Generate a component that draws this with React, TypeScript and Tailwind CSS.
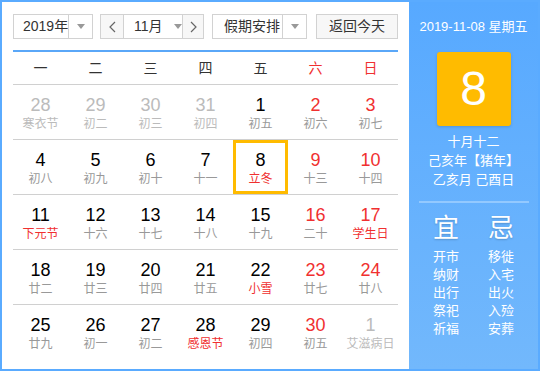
import React from "react";

type Day = {
	n: number;
	lunar: string;
	muted?: boolean;
	weekend?: boolean;
	festival?: boolean;
	today?: boolean;
};

const weeks: Day[][] = [
	[
		{ n: 28, lunar: "寒衣节", muted: true },
		{ n: 29, lunar: "初二", muted: true },
		{ n: 30, lunar: "初三", muted: true },
		{ n: 31, lunar: "初四", muted: true },
		{ n: 1, lunar: "初五" },
		{ n: 2, lunar: "初六", weekend: true },
		{ n: 3, lunar: "初七", weekend: true },
	],
	[
		{ n: 4, lunar: "初八" },
		{ n: 5, lunar: "初九" },
		{ n: 6, lunar: "初十" },
		{ n: 7, lunar: "十一" },
		{ n: 8, lunar: "立冬", festival: true, today: true },
		{ n: 9, lunar: "十三", weekend: true },
		{ n: 10, lunar: "十四", weekend: true },
	],
	[
		{ n: 11, lunar: "下元节", festival: true },
		{ n: 12, lunar: "十六" },
		{ n: 13, lunar: "十七" },
		{ n: 14, lunar: "十八" },
		{ n: 15, lunar: "十九" },
		{ n: 16, lunar: "二十", weekend: true },
		{ n: 17, lunar: "学生日", weekend: true, festival: true },
	],
	[
		{ n: 18, lunar: "廿二" },
		{ n: 19, lunar: "廿三" },
		{ n: 20, lunar: "廿四" },
		{ n: 21, lunar: "廿五" },
		{ n: 22, lunar: "小雪", festival: true },
		{ n: 23, lunar: "廿七", weekend: true },
		{ n: 24, lunar: "廿八", weekend: true },
	],
	[
		{ n: 25, lunar: "廿九" },
		{ n: 26, lunar: "初一" },
		{ n: 27, lunar: "初二" },
		{ n: 28, lunar: "感恩节", festival: true },
		{ n: 29, lunar: "初四" },
		{ n: 30, lunar: "初五", weekend: true },
		{ n: 1, lunar: "艾滋病日", muted: true },
	],
];

const weekdays = ["一", "二", "三", "四", "五", "六", "日"];
const good = ["开市", "纳财", "出行", "祭祀", "祈福"];
const bad = ["移徙", "入宅", "出火", "入殓", "安葬"];

function Caret() {
	return (
		<span className="w-0 h-0 border-x-[4px] border-x-transparent border-t-[5px] border-t-[#999]" />
	);
}

function Chevron({ dir }: { dir: "left" | "right" }) {
	return (
		<svg width="7" height="12" viewBox="0 0 7 12" fill="none">
			<polyline
				points={dir === "left" ? "6,1 1,6 6,11" : "1,1 6,6 1,11"}
				stroke="#666"
				strokeWidth="1.2"
			/>
		</svg>
	);
}

function DayCell({ d }: { d: Day }) {
	const numColor = d.muted
		? "text-[#bbbbbb]"
		: d.weekend
			? "text-[#f03030]"
			: "text-[#000]";
	const lunarColor = d.muted
		? "text-[#bbbbbb]"
		: d.festival
			? "text-[#f03030]"
			: "text-[#999]";
	return (
		<div className="relative flex flex-col items-center pt-[9px]">
			<span className={`text-[18px] leading-[22px] ${numColor}`}>{d.n}</span>
			<span className={`text-[12px] leading-[16px] whitespace-nowrap ${lunarColor}`}>
				{d.lunar}
			</span>
			{d.today && (
				<div className="absolute inset-0 border-[3px] border-[#ffbb00]" />
			)}
		</div>
	);
}

export default function App() {
	return (
		<div
			className="w-[540px] h-[371px] border-2 border-[#5aabff] flex bg-white"
			style={{ fontFamily: '"Liberation Sans", "Noto Sans CJK SC", sans-serif' }}
		>
			<div className="w-[407px] px-[11px] pt-[12px]">
				<div className="flex h-[25px] text-[14px] text-[#333]">
					<div className="w-[80px] flex border border-[#d2d2d2]">
						<span className="flex-1 pl-[9px] leading-[23px] whitespace-nowrap">
							2019年
						</span>
						<span className="w-[25px] shrink-0 flex items-center justify-center border-l border-[#d2d2d2]">
							<Caret />
						</span>
					</div>
					<div className="ml-[7px] w-[104px] flex border border-[#d2d2d2]">
						<span className="w-[23px] flex items-center justify-center bg-[#f7f7f7] border-r border-[#d2d2d2]">
							<Chevron dir="left" />
						</span>
						<span className="flex-1 flex items-center pl-[10px] gap-[11px]">
							<span className="leading-[23px] whitespace-nowrap">11月</span>
							<Caret />
						</span>
						<span className="w-[21px] flex items-center justify-center bg-[#f7f7f7] border-l border-[#d2d2d2]">
							<Chevron dir="right" />
						</span>
					</div>
					<div className="ml-[8px] w-[95px] flex border border-[#d2d2d2]">
						<span className="flex-1 pl-[11px] leading-[23px] whitespace-nowrap">
							假期安排
						</span>
						<span className="w-[24px] shrink-0 flex items-center justify-center border-l border-[#d2d2d2]">
							<Caret />
						</span>
					</div>
					<div className="ml-[9px] flex-1 flex items-center justify-center border border-[#d2d2d2] bg-[#f7f7f7]">
						返回今天
					</div>
				</div>
				<div className="mt-[11px] h-[2px] bg-[#5aa7f8]" />
				<div className="grid grid-cols-7 h-[33px] items-center border-b border-[#d0d0d0] text-[14px]">
					{weekdays.map((w, i) => (
						<span
							key={w}
							className={`text-center ${i >= 5 ? "text-[#f03030]" : "text-[#333]"}`}
						>
							{w}
						</span>
					))}
				</div>
				{weeks.map((week, wi) => (
					<div
						key={wi}
						className={`grid grid-cols-7 h-[55px] ${wi < weeks.length - 1 ? "border-b border-[#d0d0d0]" : ""}`}
					>
						{week.map((d, di) => (
							<DayCell key={di} d={d} />
						))}
					</div>
				))}
			</div>
			<div className="flex-1 flex flex-col items-center bg-linear-to-b from-[#57a9ff] to-[#72b8fc] text-white">
				<div className="pt-[16px] text-[13px] leading-[18px] whitespace-nowrap">
					2019-11-08 星期五
				</div>
				<div className="mt-[16px] w-[74px] h-[74px] rounded-[3px] bg-[#ffbb00] flex items-center justify-center text-[48px] leading-none shadow-[0_1px_3px_rgba(0,0,0,0.15)]">
					8
				</div>
				<div className="mt-[6px] text-[13px] leading-[19px] text-center">
					<div>十月十二</div>
					<div>己亥年【猪年】</div>
					<div>乙亥月 己酉日</div>
				</div>
				<div className="mt-[12px] w-[110px] h-[2px] bg-[#93c9ff]" />
				<div className="mt-[10px] flex">
					<div className="w-[55px] flex flex-col items-center">
						<span className="text-[26px] leading-[30px] [text-shadow:0_1px_2px_rgba(0,0,0,0.2)]">
							宜
						</span>
						<div className="mt-[5px] text-[13px] leading-[18px] text-center">
							{good.map((g) => (
								<div key={g}>{g}</div>
							))}
						</div>
					</div>
					<div className="w-[55px] flex flex-col items-center">
						<span className="text-[26px] leading-[30px] [text-shadow:0_1px_2px_rgba(0,0,0,0.2)]">
							忌
						</span>
						<div className="mt-[5px] text-[13px] leading-[18px] text-center">
							{bad.map((b) => (
								<div key={b}>{b}</div>
							))}
						</div>
					</div>
				</div>
			</div>
		</div>
	);
}
